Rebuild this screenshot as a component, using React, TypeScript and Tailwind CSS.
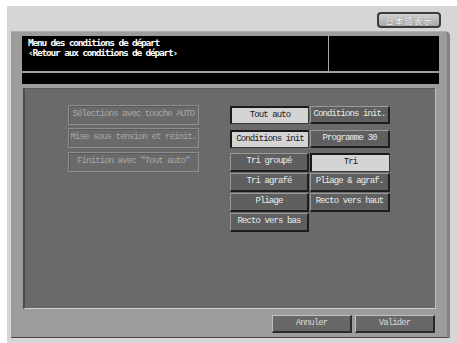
import React from "react";

const mono = { fontFamily: '"Liberation Mono", "DejaVu Sans Mono", monospace' };

const txt = "text-[9px] tracking-[-0.9px] whitespace-nowrap";

function Sel({ label }: { label: string }) {
  return (
    <div className={"h-full w-full flex items-center justify-center bg-[#d4d4d4] border-t-2 border-l-2 border-t-[#1a1a1a] border-l-[#1a1a1a] border-b border-r border-b-[#3a3a3a] border-r-[#3a3a3a] text-[#1a1a1a] " + txt}>
      {label}
    </div>
  );
}

function Btn({ label }: { label: string }) {
  return (
    <div className={"h-full w-full flex items-center justify-center bg-[#5f5f5f] border-t border-l border-t-[#9a9a9a] border-l-[#9a9a9a] border-b-2 border-r-2 border-b-[#1e1e1e] border-r-[#1e1e1e] text-[#ececec] " + txt}>
      {label}
    </div>
  );
}

function Dis({ label }: { label: string }) {
  return (
    <div className={"h-[20px] w-[131px] flex items-center justify-center border border-[#8e8e8e] bg-[#6a6a6a] text-[#a8a8a8] shadow-[inset_1px_1px_0_#5a5a5a] " + txt}>
      {label}
    </div>
  );
}

export default function App() {
  return (
    <div className="w-[457px] h-[343px] bg-white overflow-hidden" style={mono}>
      <div className="ml-[7px] mt-[6px] w-[450px] h-[337px] bg-[#d6d6d6] flex flex-col">
        {/* top bar */}
        <div className="h-[25px] flex justify-end pr-[16px] pt-[6px]">
          <div className="w-[64px] h-[16px] rounded-[4px] border-2 border-[#3c3c3c] bg-gradient-to-b from-[#d0d0d0] to-[#a8a8a8] flex items-center justify-center text-[#f4f4f4] text-[8.5px] tracking-[1px] [text-shadow:0_0_1px_#707070]" style={{ fontFamily: '"Noto Sans CJK JP", sans-serif' }}>
            日本語表示
          </div>
        </div>
        {/* main panel */}
        <div className="ml-[4px] w-[439px] h-[307px] bg-[#9d9d9d] rounded-tr-[5px] border-r-[3px] border-r-[#828282] border-b border-b-[#4a4a4a] border-t border-t-[#b0b0b0] flex flex-col">
          <div className="ml-[11px] mt-[4px] w-[417px] h-[35px] bg-black flex">
            <div className="w-[306px] h-full pl-[6px] pt-[2px] text-white font-bold text-[9.5px] leading-[10px] tracking-[-1.2px] whitespace-nowrap" style={{ fontFamily: '"DejaVu Sans Mono", monospace' }}>
              <div>Menu des conditions de départ</div>
              <div>‹Retour aux conditions de départ›</div>
            </div>
            <div className="w-[1px] h-full bg-[#a8a8a8]" />
            <div className="flex-1 h-full" />
          </div>
          <div className="ml-[11px] mt-[2px] w-[417px] h-[11px] bg-black" />
          <div className="ml-[12px] mt-[4px] w-[413px] h-[221px] bg-[#6a6a6a] border-l-2 border-l-[#4a4a4a] border-t border-t-[#5a5a5a] border-b border-b-[#d0d0d0] border-r border-r-[#c0c0c0] flex">
            <div className="ml-[43px] mt-[16px] flex flex-col">
              <Dis label="Sélections avec touche AUTO" />
              <div className="h-[3px]" />
              <Dis label="Mise sous tension et réinit." />
              <div className="h-[4px]" />
              <Dis label={'Finition avec "Tout auto"'} />
            </div>
            <div className="ml-[31px] mt-[17px] flex flex-col w-[160px]">
              <div className="flex gap-[1px] h-[18px]">
                <div className="w-[79px]"><Sel label="Tout auto" /></div>
                <div className="w-[80px]"><Btn label="Conditions init." /></div>
              </div>
              <div className="flex gap-[1px] h-[18px] mt-[6px]">
                <div className="w-[79px]"><Sel label="Conditions init" /></div>
                <div className="w-[80px]"><Btn label="Programme 30" /></div>
              </div>
              <div className="flex gap-[1px] h-[19px] mt-[5px]">
                <div className="w-[79px]"><Btn label="Tri groupé" /></div>
                <div className="w-[80px]"><Sel label="Tri" /></div>
              </div>
              <div className="flex gap-[1px] h-[19px] mt-[1px]">
                <div className="w-[79px]"><Btn label="Tri agrafé" /></div>
                <div className="w-[80px]"><Btn label="Pliage & agraf." /></div>
              </div>
              <div className="flex gap-[1px] h-[19px] mt-[1px]">
                <div className="w-[79px]"><Btn label="Pliage" /></div>
                <div className="w-[80px]"><Btn label="Recto vers haut" /></div>
              </div>
              <div className="flex gap-[1px] h-[19px] mt-[1px]">
                <div className="w-[79px]"><Btn label="Recto vers bas" /></div>
              </div>
            </div>
          </div>
          <div className="ml-[261px] mt-[6px] flex gap-[3px] h-[18px]">
            <div className={"w-[80px] h-full flex items-center justify-center bg-[#686868] border-t border-l border-t-[#c0c0c0] border-l-[#c0c0c0] border-b-2 border-r-2 border-b-[#2a2a2a] border-r-[#2a2a2a] text-[#d8d8d8] " + txt}>
              Annuler
            </div>
            <div className={"w-[80px] h-full flex items-center justify-center bg-[#686868] border-t border-l border-t-[#c0c0c0] border-l-[#c0c0c0] border-b-2 border-r-2 border-b-[#2a2a2a] border-r-[#2a2a2a] text-[#d8d8d8] " + txt}>
              Valider
            </div>
          </div>
        </div>
      </div>
    </div>
  );
}
